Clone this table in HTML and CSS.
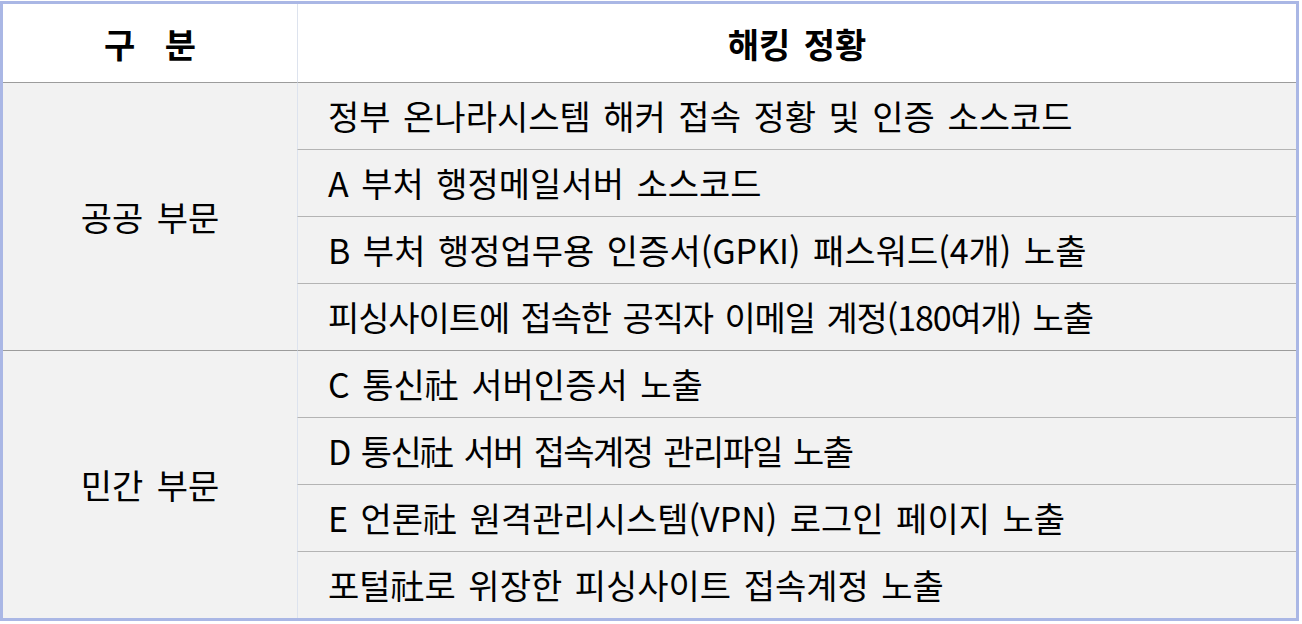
FILE: index.html
```html
<!DOCTYPE html>
<html lang="ko">
<head>
<meta charset="utf-8">
<link rel="stylesheet" href="styles.css">
</head>
<body>
<table class="tbl">
  <thead>
    <tr>
      <th class="c-cat head-cat">구 분</th>
      <th class="c-desc head-desc">해킹 정황</th>
    </tr>
  </thead>
  <tbody>
    <tr class="grp">
      <td class="c-cat" rowspan="4">공공 부문</td>
      <td class="c-desc">정부 온나라시스템 해커 접속 정황 및 인증 소스코드</td>
    </tr>
    <tr><td class="c-desc">A 부처 행정메일서버 소스코드</td></tr>
    <tr><td class="c-desc">B 부처 행정업무용 인증서(GPKI) 패스워드(4개) 노출</td></tr>
    <tr><td class="c-desc tight-1">피싱사이트에 접속한 공직자 이메일 계정(180여개) 노출</td></tr>
    <tr class="grp">
      <td class="c-cat" rowspan="4">민간 부문</td>
      <td class="c-desc">C 통신社 서버인증서 노출</td>
    </tr>
    <tr><td class="c-desc tight-2">D 통신社 서버 접속계정 관리파일 노출</td></tr>
    <tr><td class="c-desc">E 언론社 원격관리시스템(VPN) 로그인 페이지 노출</td></tr>
    <tr><td class="c-desc">포털社로 위장한 피싱사이트 접속계정 노출</td></tr>
  </tbody>
</table>
</body>
</html>
```

FILE: styles.css
```css
html, body {
  margin: 0;
  padding: 0;
  background: #ffffff;
}

body {
  font-family: "Noto Sans CJK KR", "Noto Sans", sans-serif;
  color: #000;
}

.tbl {
  margin-top: 1px;
  width: 1299px;
  border: 3px solid #aab7e5;
  border-collapse: separate;
  border-spacing: 0;
  table-layout: fixed;
}

.tbl th,
.tbl td {
  padding: 0;
  box-sizing: border-box;
}

.c-cat {
  width: 294px;
  text-align: center;
  font-size: 34px;
  word-spacing: 4px;
  background: #f2f2f2;
}

.c-desc {
  border-left: 1px solid #dde3ee;
  text-align: left;
  padding-left: 30px !important;
  font-size: 34px;
  word-spacing: 3px;
  background: #f2f2f2;
}

.tight-1 {
  letter-spacing: -1.1px;
}

.tight-2 {
  letter-spacing: -1.6px;
}

thead th {
  height: 78px;
  background: #ffffff !important;
  font-weight: bold;
  font-size: 34px;
}

.head-cat {
  word-spacing: 20px;
}

.head-desc {
  text-align: center !important;
  padding-left: 0 !important;
  word-spacing: 4px;
}

tbody td {
  height: 67px;
  border-top: 1px solid #b4b4b4;
  line-height: 1;
}

tbody tr.grp td {
  border-top-color: #9c9c9c;
}

tbody td.c-cat {
  border-top: 1px solid #9c9c9c;
}
```
